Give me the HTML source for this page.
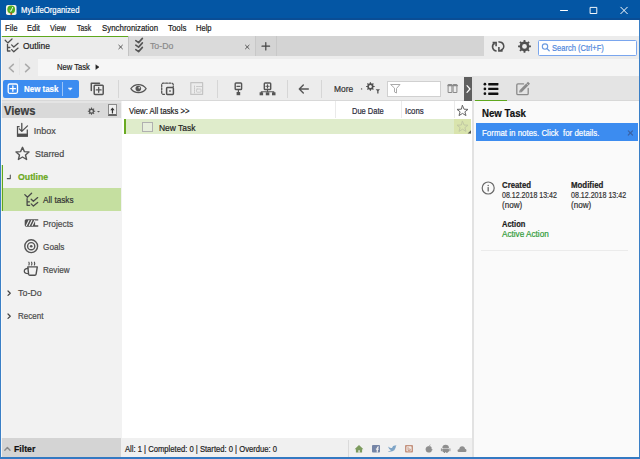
<!DOCTYPE html>
<html><head><meta charset="utf-8">
<style>
*{margin:0;padding:0;box-sizing:border-box}
html,body{width:640px;height:459px;overflow:hidden;background:#f0f0f0;font-family:"Liberation Sans",sans-serif;font-size:9px;color:#222;position:relative}
.b{position:absolute}
.tx{position:absolute;white-space:nowrap;line-height:1;transform-origin:0 0;-webkit-text-stroke:0.2px currentColor}
svg{position:absolute;left:0;top:0}
</style></head><body>
<div class="b" style="left:0;top:0;width:640px;height:20px;background:#0456a4"></div>
<div class="b" style="left:0;top:18px;width:640px;height:2px;background:#0a4d95"></div>
<div class="b" style="left:1px;top:20px;width:638px;height:16px;background:#fff"></div>
<!-- tab strip -->
<div class="b" style="left:1px;top:36px;width:638px;height:20px;background:#d4d4d4"></div>
<div class="b" style="left:1px;top:36px;width:127px;height:20px;background:#ececec"></div>

<div class="b" style="left:128px;top:36px;width:1px;height:20px;background:#c4c4c4"></div>
<div class="b" style="left:129px;top:36px;width:126px;height:20px;background:#dadada"></div>
<div class="b" style="left:255px;top:36px;width:1px;height:20px;background:#c8c8c8"></div>
<div class="b" style="left:276px;top:36px;width:1px;height:20px;background:#c8c8c8"></div>
<div class="b" style="left:484px;top:36px;width:155px;height:20px;background:#ececec"></div>
<!-- search -->
<div class="b" style="left:538px;top:39.5px;width:99px;height:16.5px;background:#fff;border:1.3px solid #7aa6ee;border-radius:1.5px"></div>
<!-- breadcrumb -->
<div class="b" style="left:1px;top:56px;width:638px;height:20px;background:#ececec"></div>
<div class="b" style="left:38px;top:58.5px;width:601px;height:17.5px;background:#f6f6f6"></div>
<div class="b" style="left:19px;top:58px;width:1px;height:17px;background:#e4e4e4"></div>
<!-- toolbar -->
<div class="b" style="left:1px;top:76px;width:638px;height:25px;background:#ececec"></div>
<div class="b" style="left:1px;top:100px;width:471px;height:1px;background:#d8d8d8"></div>
<div class="b" style="left:3px;top:80px;width:76px;height:18px;background:#3c8cf0;border-radius:2px"></div>
<div class="b" style="left:62px;top:82px;width:1px;height:14px;background:#9cc4f7"></div>
<div class="b" style="left:118px;top:80px;width:1px;height:18px;background:#d6d6d6"></div>
<div class="b" style="left:217px;top:80px;width:1px;height:18px;background:#d6d6d6"></div>
<div class="b" style="left:287px;top:80px;width:1px;height:18px;background:#d6d6d6"></div>
<div class="b" style="left:321px;top:80px;width:1px;height:18px;background:#d6d6d6"></div>
<div class="b" style="left:387px;top:81px;width:54px;height:16px;background:#fff;border:1px solid #d0d0d0"></div>
<div class="b" style="left:464px;top:77px;width:8px;height:24px;background:#5e5e5e"></div>
<!-- right panel -->

<div class="b" style="left:474px;top:76px;width:165px;height:25px;background:#e4e4e4"></div>
<div class="b" style="left:474px;top:101px;width:165px;height:356px;background:#fafafa"></div>
<div class="b" style="left:474px;top:100px;width:165px;height:1px;background:#d8d8d8"></div>
<div class="b" style="left:475px;top:99.7px;width:32px;height:1.6px;background:#5fa81e"></div>
<div class="b" style="left:476px;top:123px;width:162px;height:18px;background:#3c8cf0"></div>
<div class="b" style="left:481px;top:250px;width:147px;height:1px;background:#ebebeb"></div>
<!-- sidebar -->
<div class="b" style="left:1px;top:101px;width:120.5px;height:337px;background:#f2f2f2"></div>
<div class="b" style="left:1px;top:101px;width:120px;height:17px;background:#d9d9d9"></div>
<div class="b" style="left:1px;top:101px;width:120px;height:1.5px;background:#e4e4e4"></div>
<div class="b" style="left:108.2px;top:103.6px;width:8.5px;height:12.5px;background:#efefef;border:1px solid #8a8a8a;border-bottom:2px solid #666"></div>
<div class="b" style="left:1px;top:188px;width:120px;height:23px;background:#c5dfa0"></div>
<div class="b" style="left:1px;top:165px;width:2px;height:46px;background:#5fa81e"></div>
<div class="b" style="left:1px;top:438px;width:120px;height:19px;background:#d4d4d4"></div>
<!-- content -->

<div class="b" style="left:121.5px;top:101px;width:350.5px;height:337px;background:#fff"></div>
<div class="b" style="left:335px;top:101px;width:1px;height:17px;background:#eaeaea"></div>
<div class="b" style="left:401px;top:101px;width:1px;height:17px;background:#eaeaea"></div>
<div class="b" style="left:454px;top:101px;width:1px;height:17px;background:#eaeaea"></div>
<div class="b" style="left:124px;top:119px;width:347px;height:15px;background:#dfeccb"></div>
<div class="b" style="left:454px;top:119px;width:17px;height:15px;background:#d9e4ad"></div>
<div class="b" style="left:124px;top:119px;width:2px;height:15px;background:#6aaa22"></div>
<div class="b" style="left:142px;top:122px;width:11px;height:10px;background:#e6eedb;border:1px solid #b0b0b0"></div>
<!-- status -->
<div class="b" style="left:121px;top:438px;width:351px;height:19px;background:#f0f0f0"></div>
<div class="b" style="left:348px;top:440px;width:1px;height:17px;background:#dadada"></div>
<div class="b" style="left:472px;top:76px;width:2px;height:381px;background:#e2e2e2"></div>
<!-- window borders -->
<div class="b" style="left:0px;top:36px;width:128px;height:1.3px;background:#5fa81e"></div>
<div class="b" style="left:1px;top:36px;width:1px;height:421px;background:#fafafa;opacity:0.8"></div>
<div class="b" style="left:0;top:20px;width:1px;height:439px;background:#3a7fc6"></div>
<div class="b" style="left:639px;top:20px;width:1px;height:439px;background:#3a7fc6"></div>
<div class="b" style="left:0;top:457px;width:640px;height:2px;background:#3479c2"></div>
<svg width="640" height="459" viewBox="0 0 640 459" fill="none" stroke-linecap="round" stroke-linejoin="round">
<!-- app icon -->
<rect x="6" y="4.9" width="10.5" height="10.2" rx="1.8" fill="#f6f2ea"/>
<circle cx="11.2" cy="9.4" r="3.9" fill="#4fae22"/>
<rect x="10.4" y="12.6" width="1.7" height="2.2" fill="#b04a1a"/>
<path d="M10 10.6 L10.9 11.4 L12.6 7.4" stroke="#fff" stroke-width="0.9"/>
<!-- window controls -->
<path d="M560.5 10.5 H567.5" stroke="#fff" stroke-width="1"/>
<rect x="590.5" y="7.4" width="6.3" height="6.1" stroke="#fff" stroke-width="0.95"/>
<path d="M620.8 7.2 L627.3 13.7 M627.3 7.2 L620.8 13.7" stroke="#fff" stroke-width="1"/>
<!-- outline tab icon -->
<g stroke="#505050" stroke-width="1.3" transform="translate(5.2 39)">
<path d="M0 1.3 L2.6 3.9 L6.8 0"/>
<path d="M2.3 5.3 V12 H4.8 M2.3 8.5 H4.6"/>
<path d="M6.4 5.9 L8.6 8 L12.9 4.3"/>
<path d="M6.4 10.6 L8.6 12.8 L12.9 9.1"/>
</g>
<path d="M118.8 45.2 L122.4 48.8 M122.4 45.2 L118.8 48.8" stroke="#555" stroke-width="1"/>
<!-- todo tab icon -->
<g stroke="#555" stroke-width="1.6">
<path d="M135.8 40.6 L138.6 42.6 L142.4 38.4"/>
<path d="M135.8 45.1 L138.6 47.1 L142.4 42.9"/>
<path d="M135.8 49.6 L138.6 51.6 L142.4 47.4"/>
</g>
<path d="M245.5 45.2 L249.1 48.8 M249.1 45.2 L245.5 48.8" stroke="#555" stroke-width="1"/>
<path d="M265.8 42.5 V50 M262 46.2 H269.6" stroke="#444" stroke-width="1.2"/>
<!-- sync -->
<g stroke="#505050" stroke-width="1.6" stroke-linecap="butt" stroke-linejoin="miter">
<path d="M496.1 46.2 V42.6 H492.6"/>
<path d="M494.6 43.2 A4.2 4.2 0 0 0 496.6 51"/>
<path d="M498.9 47 V50.9 H502.6"/>
<path d="M498.4 42.1 A4.2 4.2 0 0 1 500.6 50.3"/>
</g>
<!-- gear -->
<path fill="#505050" fill-rule="evenodd" d="M529.11 44.75 L529.31 45.48 L530.94 45.49 L530.94 47.31 L529.31 47.32 L528.93 48.50 L528.56 49.15 L529.69 50.31 L528.41 51.59 L527.25 50.46 L526.15 51.01 L525.42 51.21 L525.41 52.84 L523.59 52.84 L523.58 51.21 L522.40 50.83 L521.75 50.46 L520.59 51.59 L519.31 50.31 L520.44 49.15 L519.89 48.05 L519.69 47.32 L518.06 47.31 L518.06 45.49 L519.69 45.48 L520.07 44.30 L520.44 43.65 L519.31 42.49 L520.59 41.21 L521.75 42.34 L522.85 41.79 L523.58 41.59 L523.59 39.96 L525.41 39.96 L525.42 41.59 L526.60 41.97 L527.25 42.34 L528.41 41.21 L529.69 42.49 L528.56 43.65Z M526.9 46.4 A2.4 2.4 0 1 0 522.1 46.4 A2.4 2.4 0 1 0 526.9 46.4Z"/>
<!-- search glass -->
<circle cx="545" cy="46.6" r="2.7" stroke="#6a9ae0" stroke-width="1.1"/>
<path d="M547 48.6 L549.2 50.8" stroke="#6a9ae0" stroke-width="1.3"/>
<!-- breadcrumb arrows -->
<path d="M13.3 64.4 L9.3 68 L13.3 71.6" stroke="#ababab" stroke-width="1.6"/>
<path d="M25.6 64.4 L29.6 68 L25.6 71.6" stroke="#ababab" stroke-width="1.6"/>
<path d="M96 65 L99 67.1 L96 69.2Z" fill="#222" stroke="#222" stroke-width="0.5"/>
<!-- new task button icons -->
<rect x="8.2" y="84" width="9.3" height="9.3" rx="1.5" stroke="#fff" stroke-width="1.3"/>
<path d="M12.85 86 V91.3 M10.2 88.65 H15.5" stroke="#fff" stroke-width="1.3"/>
<path d="M68.5 88 L72.2 88 L70.35 90Z" fill="#fff" stroke="#fff" stroke-width="0.5"/>
<!-- copy icon -->
<g stroke="#555" stroke-width="1.5">
<path d="M91.3 90.5 V83.2 H99.5"/>
<rect x="94.2" y="85.3" width="9" height="9.1" rx="0.8"/>
<path d="M98.7 87.5 V92.3 M96.3 89.9 H101.1" stroke-width="1.3"/>
</g>
<!-- eye -->
<path d="M130.9 88.6 C133.2 85.2 135.8 84.6 138.5 84.6 C141.2 84.6 143.8 85.2 146.1 88.6 C143.8 92 141.2 92.6 138.5 92.6 C135.8 92.6 133.2 92 130.9 88.6Z" stroke="#555" stroke-width="1.3"/>
<circle cx="138.3" cy="88.6" r="2.8" fill="#555"/>
<circle cx="139.3" cy="87.7" r="0.9" fill="#dcdcdc"/>
<!-- dashed square -->
<path d="M164.5 94.3 H163.3 Q161.7 94.3 161.7 92.7 V84.8 Q161.7 83.2 163.3 83.2 H171.6 Q173.3 83.2 173.3 84.8 V86.5" stroke="#555" stroke-width="1.3" stroke-dasharray="1.8 1.4"/>
<rect x="166.6" y="87.6" width="6.8" height="6.8" rx="0.8" stroke="#505050" stroke-width="1.5"/>
<circle cx="170" cy="91" r="1" fill="#777"/>
<!-- disabled icon -->
<rect x="190.8" y="82.6" width="11.8" height="11.8" stroke="#c4c4c4" stroke-width="1.2"/>
<path d="M194.5 86 V93 M196.5 86.5 H202" stroke="#c8c8c8" stroke-width="1" stroke-dasharray="1.2 0.8"/>
<rect x="196.5" y="89" width="4.5" height="3.2" rx="0.6" stroke="#c8c8c8" stroke-width="0.9"/>
<!-- collapse icon -->
<rect x="235.2" y="83" width="6.4" height="6.5" rx="0.8" stroke="#555" stroke-width="1.4"/>
<path d="M236.9 86.3 H239.9 M238.4 89.5 V92" stroke="#555" stroke-width="1.2"/>
<rect x="236.6" y="92" width="3.6" height="3.2" fill="#555"/>
<!-- expand tree icon -->
<rect x="264.3" y="83" width="6.4" height="6.5" rx="0.8" stroke="#555" stroke-width="1.4"/>
<path d="M265.9 86.3 H269.1 M267.5 84.7 V87.9 M267.5 89.5 V91.8 M261.3 91.8 H273.8 M261.3 91.8 V93 M273.8 91.8 V93" stroke="#555" stroke-width="1.1"/>
<rect x="259.6" y="92.3" width="3.5" height="3" fill="#555"/>
<rect x="265.8" y="92.3" width="3.5" height="3" fill="#555"/>
<rect x="272" y="92.3" width="3.5" height="3" fill="#555"/>
<!-- back arrow -->
<path d="M299.3 89 H308.3 M303.3 85 L299.3 89 L303.3 93" stroke="#555" stroke-width="1.4"/>
<!-- dot gear funnel -->
<circle cx="361.6" cy="88.9" r="0.7" fill="#555"/>
<path fill="#505050" fill-rule="evenodd" d="M373.41 85.42 L373.54 85.90 L374.66 85.90 L374.66 87.10 L373.54 87.10 L373.29 87.87 L373.05 88.30 L373.84 89.09 L372.99 89.94 L372.20 89.15 L371.48 89.51 L371.00 89.64 L371.00 90.76 L369.80 90.76 L369.80 89.64 L369.03 89.39 L368.60 89.15 L367.81 89.94 L366.96 89.09 L367.75 88.30 L367.39 87.58 L367.26 87.10 L366.14 87.10 L366.14 85.90 L367.26 85.90 L367.51 85.13 L367.75 84.70 L366.96 83.91 L367.81 83.06 L368.60 83.85 L369.32 83.49 L369.80 83.36 L369.80 82.24 L371.00 82.24 L371.00 83.36 L371.77 83.61 L372.20 83.85 L372.99 83.06 L373.84 83.91 L373.05 84.70Z M371.9 86.5 A1.5 1.5 0 1 0 368.9 86.5 A1.5 1.5 0 1 0 371.9 86.5Z"/>
<path d="M375.7 89.3 H380 L378.5 91 V93.4 L377.2 93.4 V91Z" fill="#555"/>
<path d="M391 84.5 H400 L396.5 88.5 V93 L394.5 92 V88.5Z" stroke="#aaa" stroke-width="1"/>
<!-- columns icon -->
<g stroke="#8a8a8a" stroke-width="1">
<rect x="448.5" y="84.5" width="3.4" height="8"/>
<rect x="453.5" y="84.5" width="3.4" height="8"/>
</g>
<path d="M448 85.6 H452.4 M453 85.6 H457.4" stroke="#8a8a8a" stroke-width="1.4"/>
<path d="M467 85.7 L470 89 L467 92.3" stroke="#fff" stroke-width="1.2"/>
<!-- list icon -->
<g fill="#111">
<circle cx="484.9" cy="84.2" r="1.35"/><circle cx="484.9" cy="88.9" r="1.35"/><circle cx="484.9" cy="93.7" r="1.35"/>
<rect x="488.2" y="83" width="10.2" height="2.4" rx="0.4"/><rect x="488.2" y="87.7" width="10.2" height="2.4" rx="0.4"/><rect x="488.2" y="92.5" width="10.2" height="2.4" rx="0.4"/>
</g>
<!-- edit icon -->
<path d="M523.6 83.9 H518 Q516.8 83.9 516.8 85.1 V93.4 Q516.8 94.6 518 94.6 H527 Q528.2 94.6 528.2 93.4 V88.4" stroke="#8a8a8a" stroke-width="1.3"/>
<path d="M520.6 91.2 L529 82.8" stroke="#8a8a8a" stroke-width="2.9" stroke-linecap="butt"/>
<path d="M519.1 92.6 L519.6 90.2 L521.6 92.2Z" fill="#8a8a8a"/>
<path d="M526.5 83.6 L528.2 85.3" stroke="#dedede" stroke-width="0.7"/>
<!-- views header -->
<path fill="#555" fill-rule="evenodd" d="M94.04 110.29 L94.15 110.69 L95.16 110.68 L95.16 111.72 L94.15 111.71 L93.94 112.36 L93.73 112.71 L94.46 113.43 L93.73 114.16 L93.01 113.43 L92.41 113.74 L92.01 113.85 L92.02 114.86 L90.98 114.86 L90.99 113.85 L90.34 113.64 L89.99 113.43 L89.27 114.16 L88.54 113.43 L89.27 112.71 L88.96 112.11 L88.85 111.71 L87.84 111.72 L87.84 110.68 L88.85 110.69 L89.06 110.04 L89.27 109.69 L88.54 108.97 L89.27 108.24 L89.99 108.97 L90.59 108.66 L90.99 108.55 L90.98 107.54 L92.02 107.54 L92.01 108.55 L92.66 108.76 L93.01 108.97 L93.73 108.24 L94.46 108.97 L93.73 109.69Z M92.8 111.2 A1.3 1.3 0 1 0 90.2 111.2 A1.3 1.3 0 1 0 92.8 111.2Z"/>
<path d="M97 111 H100 L98.5 112.6Z" fill="#555"/>
<path d="M112.45 113 V109.5" stroke="#333" stroke-width="1.2"/><path d="M110.3 110.2 L112.45 107.4 L114.6 110.2Z" fill="#333"/>
<!-- list header star -->
<path d="M462.5 105.5 L464 109.2 L468 109.4 L464.9 111.8 L466 115.6 L462.5 113.4 L459 115.6 L460.1 111.8 L457 109.4 L461 109.2Z" stroke="#666" stroke-width="1"/>
<path d="M462.5 121.3 L464 125 L468 125.2 L464.9 127.6 L466 131.4 L462.5 129.2 L459 131.4 L460.1 127.6 L457 125.2 L461 125Z" stroke="#c2c9a4" stroke-width="1"/>
<path d="M471 130.2 V133.6 H467.6Z" fill="#555"/>
<!-- sidebar icons -->
<path d="M19.6 126.7 H17.5 V136.1 H27.3 V129.4" stroke="#505050" stroke-width="1.25" stroke-linecap="butt" stroke-linejoin="miter"/>
<rect x="17" y="133.6" width="10.9" height="3" fill="#505050"/>
<path d="M21.8 123.4 V131 M19.3 128.9 L21.8 131.4 L24.4 128.9 L27.5 125.9" stroke="#505050" stroke-width="1.3"/>
<path d="M22.5 147.3 L24.4 151.6 L29 152 L25.5 155 L26.6 159.5 L22.5 157 L18.4 159.5 L19.5 155 L16 152 L20.6 151.6Z" stroke="#555" stroke-width="1.4"/>
<path d="M10.3 175 V178.6 H7.3" stroke="#555" stroke-width="1.1"/>
<!-- all tasks icon -->
<g stroke="#4a4a4a" stroke-width="1.3" transform="translate(24.8 193.3)">
<path d="M0 1.3 L2.6 3.9 L6.8 0"/>
<path d="M2.3 5.3 V12 H4.8 M2.3 8.5 H4.6"/>
<path d="M6.4 5.9 L8.6 8 L12.9 4.3"/>
<path d="M6.4 10.6 L8.6 12.8 L12.9 9.1"/>
</g>
<!-- projects -->
<path d="M26.3 219.2 H35.1 V226.7 H26.3 Q24.7 226.7 24.7 225.1 V220.8 Q24.7 219.2 26.3 219.2Z" fill="#505050"/>
<path d="M35 219.9 H38.25 M35 226 H38.25" stroke="#505050" stroke-width="1.4" stroke-linecap="butt"/>
<path d="M26.4 225.4 L28.9 220.5 M29.3 225.4 L31.8 220.5 M32.2 225.4 L34.7 220.5" stroke="#f2f2f2" stroke-width="1.1"/>
<!-- goals -->
<circle cx="31.2" cy="246.2" r="6.4" stroke="#555" stroke-width="1.4"/>
<circle cx="31.2" cy="246.2" r="3.6" stroke="#555" stroke-width="1.4"/>
<circle cx="31.2" cy="246.2" r="1.3" fill="#555"/>
<!-- review -->
<path d="M27.8 266.9 H37.3 L36.1 274.2 Q35.9 275.3 34.8 275.3 H29.9 Q28.8 275.3 28.6 274.2Z" stroke="#505050" stroke-width="1.4"/>
<path d="M27.9 268.4 Q24.3 268.7 24.3 271.2 Q24.3 273.6 28.4 273.6" stroke="#505050" stroke-width="1.3"/>
<path d="M28.9 262.2 q0.7 1.4 0 2.8 M31.6 262.2 q0.7 1.4 0 2.8 M34.4 262.2 q0.7 1.4 0 2.8" stroke="#505050" stroke-width="1.15"/>
<!-- to-do / recent arrows -->
<path d="M8 291 L10.3 293.2 L8 295.4" stroke="#444" stroke-width="1.2"/>
<path d="M8 314 L10.3 316.2 L8 318.4" stroke="#444" stroke-width="1.2"/>
<!-- filter caret -->
<path d="M4.8 450.2 L7.4 447.6 L10 450.2" stroke="#8a8a8a" stroke-width="1.4"/>
<!-- info icon -->
<circle cx="488.2" cy="188" r="6" stroke="#6a6a6a" stroke-width="1.2"/>
<path d="M488.2 187.6 V190.9" stroke="#6a6a6a" stroke-width="1.3"/>
<circle cx="488.2" cy="185.4" r="0.75" fill="#6a6a6a"/>
<!-- banner x -->
<path d="M628.3 130.8 L632.5 135 M632.5 130.8 L628.3 135" stroke="#3a64a8" stroke-width="1.2"/>
<!-- status icons -->
<path d="M354.6 449.3 L359 445 L363.4 449.3 H362.1 V452.6 H355.9 V449.3Z" fill="#7c9b5e"/>
<rect x="358.4" y="450.2" width="1.3" height="2.4" fill="#f0f0f0"/>
<rect x="372" y="445" width="8" height="7.6" rx="1" fill="#7585a6"/>
<path d="M377.3 452.6 V448.2 Q377.3 446.8 378.8 446.8 M375.9 449.1 H378.8" stroke="#f0f0f0" stroke-width="1.2" stroke-linecap="butt"/>
<path d="M388 446.6 Q390 448.6 392 447.9 Q392.8 445.2 395.4 445.5 L396.5 445.1 L395.9 446.3 Q395.7 451.3 389.8 451.8 Q388.6 451.8 387.9 451.2 Q390 451.1 391 450.2 Q388.7 449.5 388 446.6Z" fill="#7ea4c6"/>
<rect x="405" y="445" width="8" height="7.6" rx="1" fill="#c4927e"/>
<rect x="406.4" y="446.3" width="5.2" height="5" rx="0.8" fill="#f2ece8"/>
<path d="M408 447.3 V450.5 H410.3 V449 H408.8" stroke="#c4927e" stroke-width="0.8"/>
<path d="M428.8 446.6 Q426 446 425.8 449 Q426 452.3 428.2 452.3 Q428.8 452 429.4 452.3 Q431.5 452.3 432.2 449.5 Q430.8 448.6 431.2 447 Q430.6 446 428.8 446.6Z M429 446.3 Q429.3 445 430.3 444.8" fill="#8e8e8e" stroke="#8e8e8e" stroke-width="0.5"/>
<path d="M442.3 448 Q442.5 444.8 445.6 444.8 Q448.8 444.8 449 448Z" fill="#8e8e8e"/>
<rect x="442.3" y="448.5" width="6.7" height="3.4" rx="0.8" fill="#8e8e8e"/>
<rect x="443.8" y="451" width="1.4" height="2" fill="#8e8e8e"/><rect x="446.2" y="451" width="1.4" height="2" fill="#8e8e8e"/>
<rect x="440.9" y="448.4" width="1" height="2.8" fill="#8e8e8e"/><rect x="449.4" y="448.4" width="1" height="2.8" fill="#8e8e8e"/>
<path d="M458.5 452 Q457.5 452 457.5 450.6 Q457.5 449.2 459.2 449.2 Q459.5 446.2 462.2 446.2 Q464.8 446.2 465 448.8 Q466.5 449 466.5 450.5 Q466.5 452 465.2 452Z" fill="#8e8e8e"/>
</svg>
<div class="tx" style="left:20.65px;top:6.08px;font-size:9px;font-weight:normal;color:#fff;transform:scaleX(0.8588)">MyLifeOrganized</div>
<div class="tx" style="left:5.05px;top:24.28px;font-size:9px;font-weight:normal;color:#1b1b1b;transform:scaleX(0.8571)">File</div>
<div class="tx" style="left:26.85px;top:24.28px;font-size:9px;font-weight:normal;color:#1b1b1b;transform:scaleX(0.8313)">Edit</div>
<div class="tx" style="left:50.05px;top:24.28px;font-size:9px;font-weight:normal;color:#1b1b1b;transform:scaleX(0.8200)">View</div>
<div class="tx" style="left:76.75px;top:24.28px;font-size:9px;font-weight:normal;color:#1b1b1b;transform:scaleX(0.7632)">Task</div>
<div class="tx" style="left:101.65px;top:24.28px;font-size:9px;font-weight:normal;color:#1b1b1b;transform:scaleX(0.8750)">Synchronization</div>
<div class="tx" style="left:168.25px;top:24.28px;font-size:9px;font-weight:normal;color:#1b1b1b;transform:scaleX(0.8714)">Tools</div>
<div class="tx" style="left:196.25px;top:24.28px;font-size:9px;font-weight:normal;color:#1b1b1b;transform:scaleX(0.8421)">Help</div>
<div class="tx" style="left:23.05px;top:41.98px;font-size:9px;font-weight:normal;color:#222;transform:scaleX(0.9429)">Outline</div>
<div class="tx" style="left:150.25px;top:41.88px;font-size:9px;font-weight:normal;color:#8a8a8a;transform:scaleX(0.9708)">To-Do</div>
<div class="tx" style="left:552.25px;top:44.18px;font-size:9px;font-weight:normal;color:#4f88dc;transform:scaleX(0.8387)">Search (Ctrl+F)</div>
<div class="tx" style="left:56.65px;top:62.88px;font-size:9px;font-weight:normal;color:#222;transform:scaleX(0.8462)">New Task</div>
<div class="tx" style="left:24.45px;top:84.88px;font-size:9px;font-weight:bold;color:#fff;transform:scaleX(0.8821)">New task</div>
<div class="tx" style="left:334.35px;top:84.88px;font-size:9px;font-weight:normal;color:#333;transform:scaleX(0.9350)">More</div>
<div class="tx" style="left:3.55px;top:105.04px;font-size:12px;font-weight:bold;color:#3c3c3c;transform:scaleX(0.9324)">Views</div>
<div class="tx" style="left:129.05px;top:106.98px;font-size:9px;font-weight:normal;color:#222;transform:scaleX(0.8600)">View: All tasks &gt;&gt;</div>
<div class="tx" style="left:351.55px;top:106.98px;font-size:9px;font-weight:normal;color:#2a2a3a;transform:scaleX(0.8342)">Due Date</div>
<div class="tx" style="left:404.88px;top:106.98px;font-size:9px;font-weight:normal;color:#2a2a3a;transform:scaleX(0.8714)">Icons</div>
<div class="tx" style="left:158.85px;top:122.76px;font-size:9.5px;font-weight:normal;color:#222;transform:scaleX(0.8902)">New Task</div>
<div class="tx" style="left:33.85px;top:127.18px;font-size:9px;font-weight:normal;color:#4a4a4a;transform:scaleX(1.0000)">Inbox</div>
<div class="tx" style="left:34.65px;top:150.18px;font-size:9px;font-weight:normal;color:#4a4a4a;transform:scaleX(0.9931)">Starred</div>
<div class="tx" style="left:17.65px;top:173.18px;font-size:9px;font-weight:bold;color:#6aa820;transform:scaleX(0.9710)">Outline</div>
<div class="tx" style="left:43.35px;top:196.18px;font-size:9px;font-weight:normal;color:#333;transform:scaleX(0.9118)">All tasks</div>
<div class="tx" style="left:43.25px;top:220.18px;font-size:9px;font-weight:normal;color:#4a4a4a;transform:scaleX(0.9273)">Projects</div>
<div class="tx" style="left:43.25px;top:243.18px;font-size:9px;font-weight:normal;color:#4a4a4a;transform:scaleX(0.9125)">Goals</div>
<div class="tx" style="left:43.25px;top:266.18px;font-size:9px;font-weight:normal;color:#4a4a4a;transform:scaleX(0.9000)">Review</div>
<div class="tx" style="left:17.65px;top:289.18px;font-size:9px;font-weight:normal;color:#4a4a4a;transform:scaleX(0.9875)">To-Do</div>
<div class="tx" style="left:17.65px;top:312.18px;font-size:9px;font-weight:normal;color:#4a4a4a;transform:scaleX(0.8897)">Recent</div>
<div class="tx" style="left:14.00px;top:444.68px;font-size:9px;font-weight:bold;color:#111;transform:scaleX(0.9682)">Filter</div>
<div class="tx" style="left:125.05px;top:445.22px;font-size:8.6px;font-weight:normal;color:#222;transform:scaleX(0.8889)">All: 1 | Completed: 0 | Started: 0 | Overdue: 0</div>
<div class="tx" style="left:482.25px;top:107.59px;font-size:11px;font-weight:bold;color:#111;transform:scaleX(0.8800)">New Task</div>
<div class="tx" style="left:482.25px;top:128.88px;font-size:9px;font-weight:normal;color:#fff;transform:scaleX(0.8797)">Format in notes. Click&nbsp; for details.</div>
<div class="tx" style="left:502.25px;top:181.18px;font-size:9px;font-weight:bold;color:#222;transform:scaleX(0.8667)">Created</div>
<div class="tx" style="left:502.05px;top:191.42px;font-size:8.6px;font-weight:normal;color:#333;transform:scaleX(0.8209)">08.12.2018 13:42</div>
<div class="tx" style="left:502.05px;top:201.42px;font-size:8.6px;font-weight:normal;color:#333;transform:scaleX(0.9381)">(now)</div>
<div class="tx" style="left:571.25px;top:181.18px;font-size:9px;font-weight:bold;color:#222;transform:scaleX(0.8730)">Modified</div>
<div class="tx" style="left:571.25px;top:191.42px;font-size:8.6px;font-weight:normal;color:#333;transform:scaleX(0.8239)">08.12.2018 13:42</div>
<div class="tx" style="left:571.25px;top:201.42px;font-size:8.6px;font-weight:normal;color:#333;transform:scaleX(0.9381)">(now)</div>
<div class="tx" style="left:502.05px;top:219.88px;font-size:9px;font-weight:bold;color:#1a1a1a;transform:scaleX(0.8357)">Action</div>
<div class="tx" style="left:502.05px;top:229.88px;font-size:9px;font-weight:normal;color:#2f9a38;transform:scaleX(0.9078)">Active Action</div>
</body></html>
